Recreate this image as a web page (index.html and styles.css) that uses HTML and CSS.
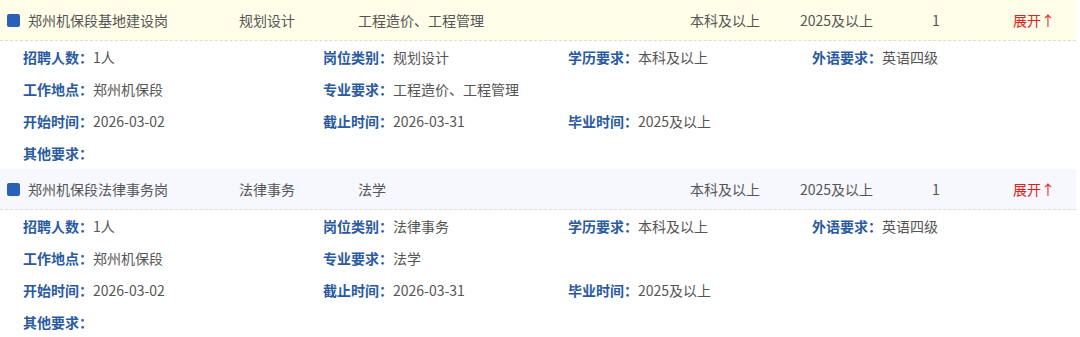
FILE: index.html
```html
<!DOCTYPE html>
<html lang="zh-CN">
<head>
<meta charset="utf-8">
<link rel="stylesheet" href="styles.css">
</head>
<body>
<div class="list">
  <div class="job">
    <div class="head head-yellow">
      <span class="mark"></span>
      <span class="c-title">郑州机保段基地建设岗</span>
      <span class="c-type">规划设计</span>
      <span class="c-major">工程造价、工程管理</span>
      <span class="c-edu">本科及以上</span>
      <span class="c-grad">2025及以上</span>
      <span class="c-num">1</span>
      <span class="c-toggle">展开↑</span>
    </div>
    <div class="detail">
      <div class="cell"><b>招聘人数：</b>1人</div>
      <div class="cell"><b>岗位类别：</b>规划设计</div>
      <div class="cell"><b>学历要求：</b>本科及以上</div>
      <div class="cell"><b>外语要求：</b>英语四级</div>
      <div class="cell"><b>工作地点：</b>郑州机保段</div>
      <div class="cell"><b>专业要求：</b>工程造价、工程管理</div>
      <div class="cell"></div>
      <div class="cell"></div>
      <div class="cell"><b>开始时间：</b>2026-03-02</div>
      <div class="cell"><b>截止时间：</b>2026-03-31</div>
      <div class="cell"><b>毕业时间：</b>2025及以上</div>
      <div class="cell"></div>
      <div class="cell"><b>其他要求：</b></div>
    </div>
  </div>
  <div class="job">
    <div class="head head-blue">
      <span class="mark"></span>
      <span class="c-title">郑州机保段法律事务岗</span>
      <span class="c-type">法律事务</span>
      <span class="c-major">法学</span>
      <span class="c-edu">本科及以上</span>
      <span class="c-grad">2025及以上</span>
      <span class="c-num">1</span>
      <span class="c-toggle">展开↑</span>
    </div>
    <div class="detail">
      <div class="cell"><b>招聘人数：</b>1人</div>
      <div class="cell"><b>岗位类别：</b>法律事务</div>
      <div class="cell"><b>学历要求：</b>本科及以上</div>
      <div class="cell"><b>外语要求：</b>英语四级</div>
      <div class="cell"><b>工作地点：</b>郑州机保段</div>
      <div class="cell"><b>专业要求：</b>法学</div>
      <div class="cell"></div>
      <div class="cell"></div>
      <div class="cell"><b>开始时间：</b>2026-03-02</div>
      <div class="cell"><b>截止时间：</b>2026-03-31</div>
      <div class="cell"><b>毕业时间：</b>2025及以上</div>
      <div class="cell"></div>
      <div class="cell"><b>其他要求：</b></div>
    </div>
  </div>
</div>
</body>
</html>
```

FILE: styles.css
```css
html, body {
  margin: 0;
  padding: 0;
  background: #ffffff;
}
body {
  font-family: "Noto Sans CJK SC", "Noto Sans", sans-serif;
  font-size: 14px;
  color: #555555;
}
.list {
  width: 1080px;
}
.head {
  display: flex;
  align-items: center;
  height: 40px;
  width: 1076px;
  border-bottom: 1px dashed #dcdcdc;
  box-sizing: content-box;
}
.head-yellow {
  background: #fefee9;
}
.head-blue {
  background: #f6f8fd;
}
.mark {
  width: 13px;
  height: 13px;
  background: #2b60b8;
  border-radius: 2px;
  margin-left: 7px;
  margin-right: 8px;
  flex: none;
}
.head span {
  flex: none;
  white-space: nowrap;
}
.c-title { width: 211px; }
.c-type { width: 119px; }
.c-major { width: 332px; }
.c-edu { width: 110px; }
.c-grad { width: 132px; }
.c-num { width: 81px; }
.c-toggle { color: #e02020; }
.detail {
  display: grid;
  grid-template-columns: 300px 245px 244px 1fr;
  grid-auto-rows: 32px;
  padding-left: 23px;
  align-items: center;
}
.cell {
  white-space: nowrap;
}
.cell b {
  color: #2a5aa0;
  font-weight: bold;
}
```
